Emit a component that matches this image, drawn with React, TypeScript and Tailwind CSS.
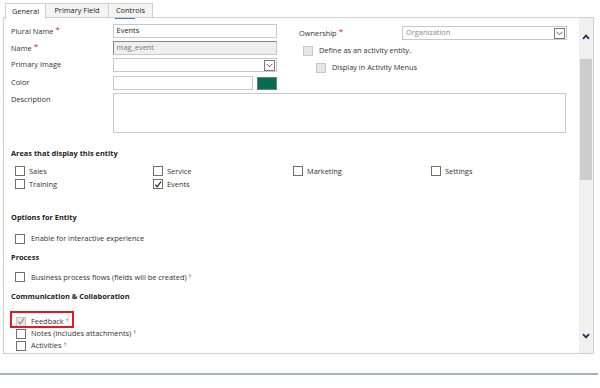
import React from "react";

const font = { fontFamily: '"Open Sans", "Liberation Sans", sans-serif' };

function Req() {
  return <span className="text-[#e81123] text-[8px] leading-none relative -top-[2px] ml-[2px]">*</span>;
}

function Dagger() {
  return <span className="text-[6px] relative -top-[2px] ml-[2px] text-[#555]">†</span>;
}

function Box({ checked = false, disabled = false }: { checked?: boolean; disabled?: boolean }) {
  return (
    <span
      className={
        "w-[10px] h-[10px] shrink-0 border flex items-center justify-center " +
        (disabled ? "bg-[#e6e6e6] border-[#c6c6c6]" : "bg-white border-[#6f6f6f]")
      }
    >
      {checked && (
        <svg width="9" height="9" viewBox="0 0 9 9">
          <path
            d="M1.5 4.6 L3.6 7 L7.8 1.3"
            fill="none"
            stroke={disabled ? "#8a8a8a" : "#222"}
            strokeWidth="1.3"
          />
        </svg>
      )}
    </span>
  );
}

function DropBtn() {
  return (
    <span className="w-[11px] h-[11px] border border-[#7a7a7a] bg-white flex items-center justify-center mr-[1px]">
      <svg width="7" height="5" viewBox="0 0 7 5">
        <path d="M0.5 0.8 L3.5 3.8 L6.5 0.8" fill="none" stroke="#444" strokeWidth="0.9" />
      </svg>
    </span>
  );
}

function Check({
  label,
  checked,
  disabled,
  dagger,
  className = "",
}: {
  label: string;
  checked?: boolean;
  disabled?: boolean;
  dagger?: boolean;
  className?: string;
}) {
  return (
    <div className={"flex items-center gap-[4px] h-[12px] " + className}>
      <Box checked={checked} disabled={disabled} />
      {label && (
        <span className="text-[#333]">
          {label}
          {dagger && <Dagger />}
        </span>
      )}
    </div>
  );
}

export default function App() {
  return (
    <div style={font} className="w-[600px] h-[388px] bg-white relative overflow-hidden text-[7.4px] text-[#333] leading-none">
      {/* tabs */}
      <div className="flex pl-[5px] pt-[3px] h-[18px]">
        <div className="w-[41px] h-[16px] border border-b-0 border-[#cfcfcf] bg-white flex items-center justify-center text-[#222] relative z-10">
          General
        </div>
        <div className="w-[63px] h-[15px] border border-l-0 border-[#cfcfcf] bg-[#f4f4f4] flex items-center justify-center text-[#222]">
          Primary Field
        </div>
        <div className="w-[44px] h-[15px] border border-l-0 border-[#cfcfcf] bg-[#f4f4f4] flex items-center justify-center text-[#222]">
          Controls
        </div>
      </div>

      {/* panel */}
      <div className="ml-[3px] w-[591px] h-[337px] -mt-[1px] border border-[#cfcfcf] flex overflow-hidden">
        <div className="flex-1 overflow-hidden relative pl-[7px]">
          <div className="h-[1px] w-[20px] ml-[104px] bg-[#3b7fd0]" />

          {/* top form */}
          <div className="flex mt-[5px]">
            <div className="w-[266px] flex flex-col gap-[3px]">
              <div className="flex items-center h-[14px]">
                <span className="w-[102px]">Plural Name<Req /></span>
                <div className="w-[165px] h-[14px] border border-[#c8c8c8] flex items-center px-[3px] text-[#222]">Events</div>
              </div>
              <div className="flex items-center h-[14px]">
                <span className="w-[102px]">Name<Req /></span>
                <div className="w-[165px] h-[14px] border border-[#c8c8c8] border-t-[#8a8a8a] border-l-[#8a8a8a] bg-[#efefef] flex items-center px-[3px] text-[#7a7a7a]">mag_event</div>
              </div>
              <div className="flex items-center h-[14px]">
                <span className="w-[102px]">Primary Image</span>
                <div className="w-[165px] h-[14px] border border-[#c8c8c8] flex items-center justify-end"><DropBtn /></div>
              </div>
              <div className="flex items-center h-[14px] mt-[1px]">
                <span className="w-[102px]">Color</span>
                <div className="w-[141px] h-[14px] border border-[#c8c8c8]" />
                <div className="w-[20px] h-[13px] ml-[4px] bg-[#0b6b51] border border-[#5a8a7c]" />
              </div>
            </div>
            <div className="ml-[22px] flex flex-col">
              <div className="flex items-center h-[14px] mt-[2px]">
                <span className="w-[103px]">Ownership<Req /></span>
                <div className="w-[165px] h-[14px] border border-[#c8c8c8] flex items-center justify-between pl-[3px] text-[#8a8a8a]">
                  Organization
                  <DropBtn />
                </div>
              </div>
              <div className="flex items-center gap-[6px] ml-[4px] mt-[6px] h-[10px]">
                <Box disabled />
                <span>Define as an activity entity.</span>
              </div>
              <div className="flex items-center gap-[6px] ml-[17px] mt-[7px] h-[10px]">
                <Box disabled />
                <span>Display in Activity Menus</span>
              </div>
            </div>
          </div>

          <div className="flex mt-[3px]">
            <span className="w-[102px] pt-[3px]">Description</span>
            <div className="w-[453px] h-[40px] border border-[#c8c8c8]" />
          </div>

          {/* Areas */}
          <div className="font-bold text-[#222] mt-[17px]">Areas that display this entity</div>
          <div className="grid grid-cols-[138px_140px_138px_138px] ml-[4px] mt-[8px] gap-y-[1px]">
            <Check label="Sales" />
            <Check label="Service" />
            <Check label="Marketing" />
            <Check label="Settings" />
            <Check label="Training" />
            <Check label="Events" checked />
          </div>

          <div className="font-bold text-[#222] mt-[24px]">Options for Entity</div>
          <Check label="Enable for interactive experience" className="ml-[4px] mt-[11px] gap-[6px]" />

          <div className="font-bold text-[#222] mt-[9px]">Process</div>
          <Check label="Business process flows (fields will be created)" dagger className="ml-[4px] mt-[10px] gap-[6px]" />

          <div className="font-bold text-[#222] mt-[10px]">Communication &amp; Collaboration</div>
          <div className="flex flex-col mt-[15px] ml-[5px]">
            <Check label="Feedback" dagger checked disabled className="gap-[5px]" />
            <Check label="Notes (includes attachments)" dagger className="gap-[5px]" />
            <Check label="Activities" dagger className="gap-[5px]" />
            <Check label="" />
          </div>
          {/* highlight annotation around Feedback */}
          <div className="absolute left-[6px] top-[293px] w-[64px] h-[17px] border-2 border-[#e3191e]" />
        </div>

        {/* scrollbar */}
        <div className="w-[14px] bg-[#f0f0f0] flex flex-col items-center">
          <div className="h-[38px] flex items-center justify-center">
            <svg width="8" height="6" viewBox="0 0 8 6">
              <path d="M1 4.8 L4 1.6 L7 4.8" fill="none" stroke="#1e3557" strokeWidth="1.8" />
            </svg>
          </div>
          <div className="w-[12px] h-[121px] mt-[3px] bg-[#cdcdcd]" />
          <div className="flex-1" />
          <div className="h-[34px] flex items-center justify-center">
            <svg width="8" height="6" viewBox="0 0 8 6">
              <path d="M1 1.2 L4 4.4 L7 1.2" fill="none" stroke="#1e3557" strokeWidth="1.8" />
            </svg>
          </div>
        </div>
      </div>

      <div className="mt-[19px] w-[598px] h-[2px] bg-[#a9b1c6]" />
    </div>
  );
}
